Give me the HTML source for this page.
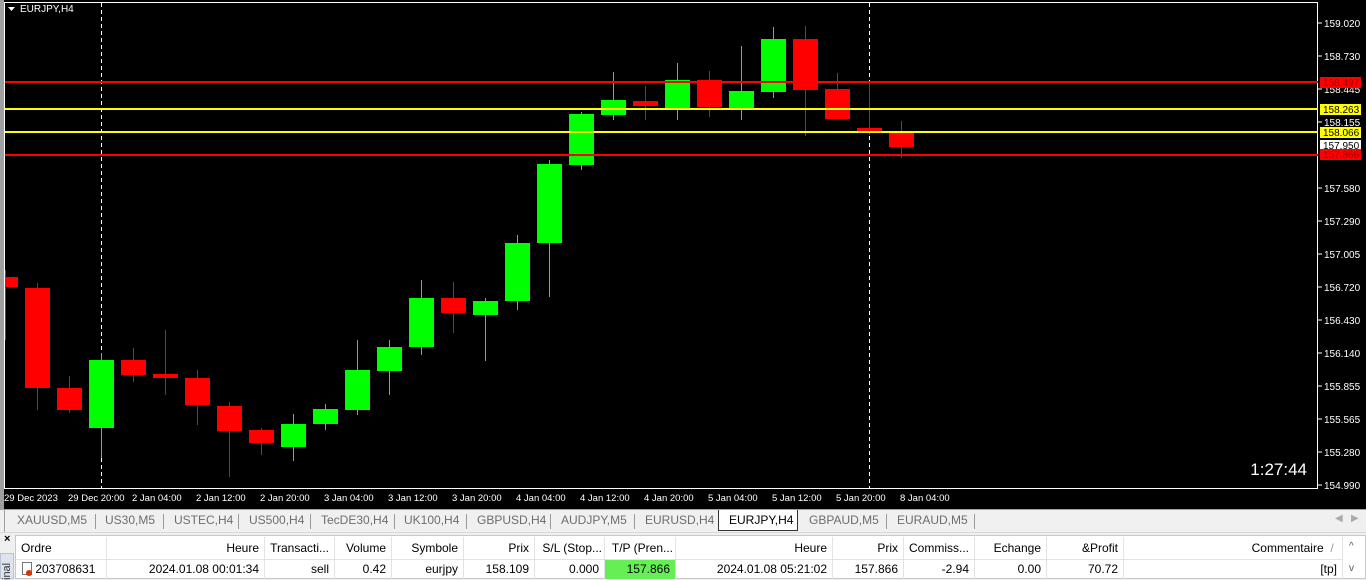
<!DOCTYPE html>
<html><head><meta charset="utf-8"><style>
*{margin:0;padding:0;box-sizing:border-box}
body{width:1366px;height:579px;overflow:hidden;background:#f0f0f0;font-family:"Liberation Sans",sans-serif;position:relative}
.t{position:absolute;font-size:12px;color:#000;white-space:nowrap}
.tab{position:absolute;top:513px;font-size:12px;color:#6d6d6d}
.sep{position:absolute;top:514px;width:1px;height:15px;background:#9a9a9a}
.h{position:absolute;top:537px;height:22px;font-size:12px;line-height:22px;padding:0 5px;border-right:1px solid #e3e3e3;white-space:nowrap;overflow:hidden}
.r{position:absolute;top:560px;height:19px;font-size:12px;line-height:19px;padding:0 5px;border-right:1px solid #e3e3e3;white-space:nowrap;overflow:hidden}
</style></head><body>
<div style="position:absolute;left:0;top:0;width:1366px;height:509px;background:#000"></div>
<div style="position:absolute;left:0;top:0;width:4px;height:509px;background:#a0a0a0"></div>
<svg style="position:absolute;left:0;top:0" width="1366" height="509" font-family="Liberation Sans" font-size="10">
<rect x="4.5" y="2.5" width="1313" height="486" fill="none" stroke="#fff"/>
<line x1="101.5" y1="3" x2="101.5" y2="488" stroke="#fff" stroke-dasharray="4,3"/>
<line x1="869.5" y1="3" x2="869.5" y2="488" stroke="#fff" stroke-dasharray="4,3"/>
<g id="c"></g>
<rect x="5" y="81" width="1313" height="2" fill="#f00"/>
<rect x="5" y="108" width="1313" height="2" fill="#ff0"/>
<rect x="5" y="131" width="1313" height="2" fill="#ff0"/>
<rect x="5" y="154" width="1313" height="2" fill="#f00"/>
<path d="M8 7h7l-3.5 4z" fill="#fff"/>
<text x="20" y="12" fill="#fff" font-size="10">EURJPY,H4</text>
<g fill="#fff">
<text x="1324" y="27">159.020</text><text x="1324" y="60">158.730</text><text x="1324" y="93">158.445</text><text x="1324" y="126">158.155</text>
<text x="1324" y="192">157.580</text><text x="1324" y="225">157.290</text><text x="1324" y="258">157.005</text><text x="1324" y="291">156.720</text>
<text x="1324" y="324">156.430</text><text x="1324" y="357">156.140</text><text x="1324" y="390">155.855</text><text x="1324" y="423">155.565</text>
<text x="1324" y="456">155.280</text><text x="1324" y="489">154.990</text>
</g>
<g stroke="#fff"><path d="M1318 23h4M1318 56h4M1318 89h4M1318 122h4M1318 188h4M1318 221h4M1318 254h4M1318 287h4M1318 320h4M1318 353h4M1318 386h4M1318 419h4M1318 452h4M1318 485h4"/></g>
<rect x="1320" y="77" width="41" height="11" fill="#f00"/><text x="1323" y="86" fill="#900">158.497</text>
<rect x="1320" y="104" width="41" height="11" fill="#ff0"/><text x="1323" y="113" fill="#000">158.263</text>
<rect x="1320" y="127" width="41" height="11" fill="#ff0"/><text x="1323" y="136" fill="#000">158.066</text>
<rect x="1320" y="140" width="41" height="11" fill="#fff"/><text x="1323" y="149" fill="#000">157.950</text>
<rect x="1320" y="149" width="41" height="11" fill="#f00"/><text x="1323" y="158" fill="#900">157.866</text>
<text x="1307" y="475" fill="#fff" font-size="17" text-anchor="end">1:27:44</text>
<g fill="#fff" font-size="9.5">
<text x="4" y="501">29 Dec 2023</text><text x="68" y="501">29 Dec 20:00</text><text x="132" y="501">2 Jan 04:00</text><text x="196" y="501">2 Jan 12:00</text>
<text x="260" y="501">2 Jan 20:00</text><text x="324" y="501">3 Jan 04:00</text><text x="388" y="501">3 Jan 12:00</text><text x="452" y="501">3 Jan 20:00</text>
<text x="516" y="501">4 Jan 04:00</text><text x="580" y="501">4 Jan 12:00</text><text x="644" y="501">4 Jan 20:00</text><text x="708" y="501">5 Jan 04:00</text>
<text x="772" y="501">5 Jan 12:00</text><text x="836" y="501">5 Jan 20:00</text><text x="900" y="501">8 Jan 04:00</text>
</g>
</svg>
<script>
var d=[[0,0,277,287,270,340],[1,0,288,388,283,410],[2,0,388,410,376,413],[3,1,360,428,353,458],[4,0,360,375,348,382],[5,0,374,378,330,395],[6,0,378,405,370,425],[7,0,406,431,402,477],[8,0,430,443,428,455],[9,1,424,447,414,461],[10,1,409,424,404,430],[11,1,370,410,340,415],[12,1,347,371,340,395],[13,1,298,347,280,355],[14,0,298,313,282,333],[15,1,301,315,298,361],[16,1,243,301,235,310],[17,1,164,243,160,297],[18,1,114,165,112,170],[19,1,100,115,72,120],[20,0,101,106,86,120],[21,1,80,110,63,120],[22,0,80,107,71,117],[23,1,91,108,46,120],[24,1,39,92,27,98],[25,0,39,90,26,136],[26,0,89,119,73,119],[27,0,128,133,82,135],[28,0,131,147,121,158]];
var s='';d.forEach(function(c){var x=5+32*c[0];var col=c[1]?'#0f0':'#f00';var w=c[0]==0?13:25;var bx=c[0]==0?5:x-12;
s+='<rect x="'+x+'" y="'+c[4]+'" width="1" height="'+(c[5]-c[4])+'" fill="'+col+'"/><rect x="'+bx+'" y="'+c[2]+'" width="'+w+'" height="'+(c[3]-c[2])+'" fill="'+col+'"/>';});
document.getElementById('c').innerHTML=s;
</script>
<div style="position:absolute;left:0;top:509px;width:1366px;height:1px;background:#a0a0a0"></div>
<div style="position:absolute;left:4px;top:510px;width:1px;height:22px;background:#a0a0a0"></div>
<span class="tab" style="left:17px">XAUUSD,M5</span><div class="sep" style="left:95px"></div>
<span class="tab" style="left:105px">US30,M5</span><div class="sep" style="left:163px"></div>
<span class="tab" style="left:174px">USTEC,H4</span><div class="sep" style="left:238px"></div>
<span class="tab" style="left:249px">US500,H4</span><div class="sep" style="left:310px"></div>
<span class="tab" style="left:321px">TecDE30,H4</span><div class="sep" style="left:394px"></div>
<span class="tab" style="left:404px">UK100,H4</span><div class="sep" style="left:466px"></div>
<span class="tab" style="left:477px">GBPUSD,H4</span><div class="sep" style="left:550px"></div>
<span class="tab" style="left:561px">AUDJPY,M5</span><div class="sep" style="left:634px"></div>
<span class="tab" style="left:645px">EURUSD,H4</span>
<div style="position:absolute;left:718px;top:510px;width:80px;height:21px;background:#fff;border:1px solid #333;border-top:none"></div>
<span class="tab" style="left:729px;color:#000">EURJPY,H4</span>
<span class="tab" style="left:809px">GBPAUD,M5</span><div class="sep" style="left:886px"></div>
<span class="tab" style="left:897px">EURAUD,M5</span><div class="sep" style="left:974px"></div>
<span class="tab" style="left:1335px;color:#aaa;font-size:10px">◀&nbsp;&nbsp;&nbsp;▶</span>
<div style="position:absolute;left:0;top:532px;width:1366px;height:1px;background:#d8d8d8"></div>
<span class="t" style="left:4px;top:533px;font-weight:bold;font-size:11px">×</span>
<div style="position:absolute;left:0;top:553px;width:14px;height:26px;background:#dde4ee;border:1px solid #b8c4d4"></div>
<span class="t" style="left:1px;font-size:11px;transform:rotate(-90deg);transform-origin:left top;top:580px;color:#333">inal</span>
<div style="position:absolute;left:15px;top:535px;width:1351px;height:44px;background:#fff;border:1px solid #c8c8c8"></div>
<div style="position:absolute;left:16px;top:559px;width:1327px;height:1px;background:#e3e3e3"></div>
<div class="h" style="left:16px;width:91px">Ordre</div>
<div class="h" style="left:107px;width:158px;text-align:right">Heure</div>
<div class="h" style="left:265px;width:70px;text-align:right">Transacti...</div>
<div class="h" style="left:335px;width:57px;text-align:right">Volume</div>
<div class="h" style="left:392px;width:72px;text-align:right">Symbole</div>
<div class="h" style="left:464px;width:71px;text-align:right">Prix</div>
<div class="h" style="left:535px;width:70px;padding:0 2px;text-align:right">S/L (Stop...</div>
<div class="h" style="left:605px;width:71px;padding:0 2px;text-align:right">T/P (Pren...</div>
<div class="h" style="left:676px;width:157px;text-align:right">Heure</div>
<div class="h" style="left:833px;width:71px;text-align:right">Prix</div>
<div class="h" style="left:904px;width:71px;text-align:right">Commiss...</div>
<div class="h" style="left:975px;width:72px;text-align:right">Echange</div>
<div class="h" style="left:1047px;width:77px;text-align:right">&amp;Profit</div>
<div class="h" style="left:1124px;width:219px;text-align:right">Commentaire&nbsp;&nbsp;<span style="color:#999">/</span>&nbsp;</div>
<span class="t" style="left:1349px;top:541px;font-size:10px;color:#555">^</span>
<div class="r" style="left:16px;width:91px;padding-left:6px"><span style="display:inline-block;width:10px;height:13px;border:1px solid #777;vertical-align:-2px;position:relative"><span style="position:absolute;left:3px;top:7px;width:6px;height:6px;border-radius:50%;background:#e03000"></span></span> 203708631</div>
<div class="r" style="left:107px;width:158px;text-align:right">2024.01.08 00:01:34</div>
<div class="r" style="left:265px;width:70px;text-align:right">sell</div>
<div class="r" style="left:335px;width:57px;text-align:right">0.42</div>
<div class="r" style="left:392px;width:72px;text-align:right">eurjpy</div>
<div class="r" style="left:464px;width:71px;text-align:right">158.109</div>
<div class="r" style="left:535px;width:70px;text-align:right">0.000</div>
<div class="r" style="left:605px;width:71px;text-align:right;background:#66ee55">157.866</div>
<div class="r" style="left:676px;width:157px;text-align:right">2024.01.08 05:21:02</div>
<div class="r" style="left:833px;width:71px;text-align:right">157.866</div>
<div class="r" style="left:904px;width:71px;text-align:right">-2.94</div>
<div class="r" style="left:975px;width:72px;text-align:right">0.00</div>
<div class="r" style="left:1047px;width:77px;text-align:right">70.72</div>
<div class="r" style="left:1124px;width:219px;text-align:right">[tp]</div>
<span class="t" style="left:1349px;top:563px;font-size:10px;color:#555">v</span>
</body></html>
